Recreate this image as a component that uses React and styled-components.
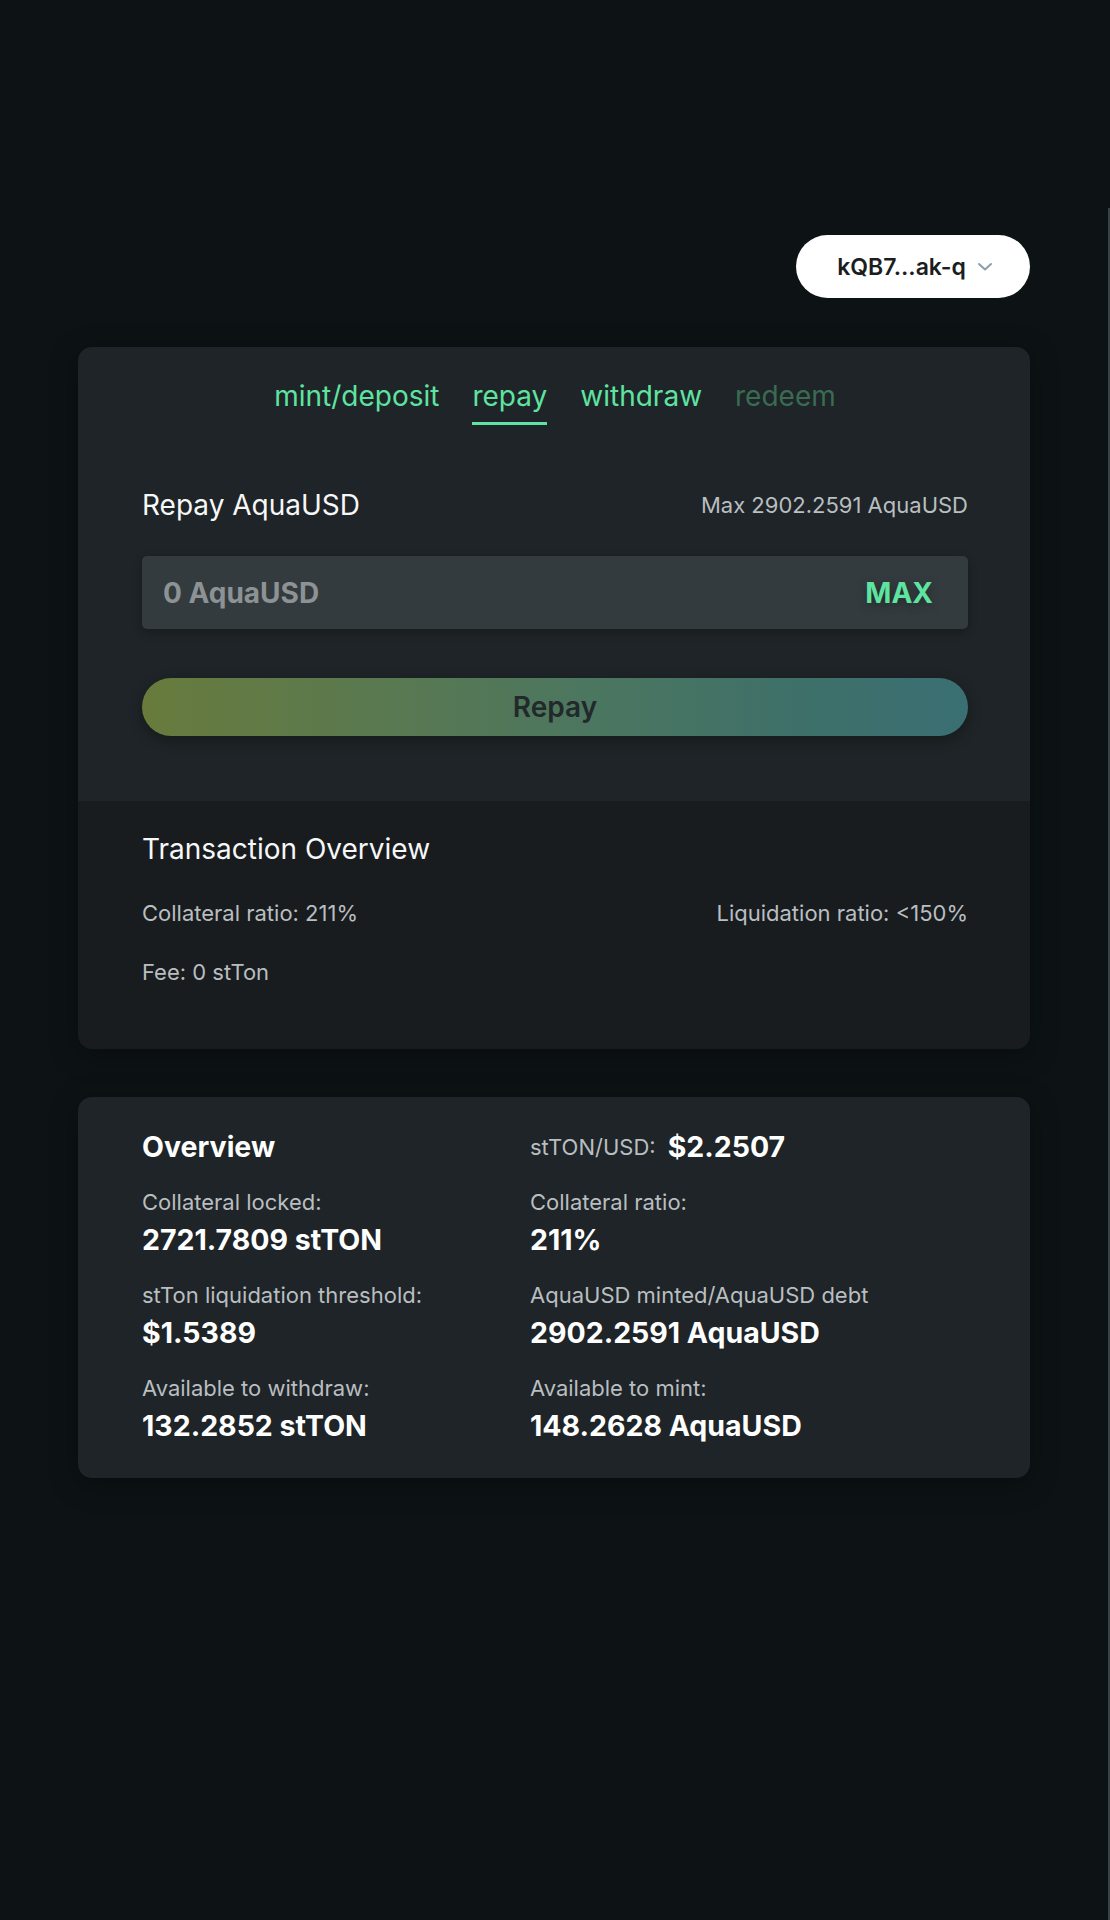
import React from "react";
import styled, { createGlobalStyle } from "styled-components";

const GlobalStyle = createGlobalStyle`
    * {
        box-sizing: border-box;
    }
    body {
        margin: 0;
        background-color: #0d1315;
        font-family: Inter, "Noto Sans", "Liberation Sans", sans-serif;
        color: #f4f5f5;
    }
`;

const colors = {
    green: "#5fe3a1",
    dimGreen: "#3a6b53",
    label: "#b9bec0",
    card: "#1e2427",
    cardDark: "#181c1f",
    input: "#343b3e",
};

function Chevron() {
    return (
        <svg width="16" height="10" viewBox="0 0 16 10" fill="none">
            <path d="M2 2l6 5.5L14 2" stroke="#8d9dab" strokeWidth="2" strokeLinecap="round" strokeLinejoin="round" />
        </svg>
    );
}

const tabs = [
    { label: "mint/deposit" },
    { label: "repay", active: true },
    { label: "withdraw" },
    { label: "redeem", disabled: true },
];

const overview = [
    { label: "Collateral locked:", value: "2721.7809 stTON" },
    { label: "Collateral ratio:", value: "211%" },
    { label: "stTon liquidation threshold:", value: "$1.5389" },
    { label: "AquaUSD minted/AquaUSD debt", value: "2902.2591 AquaUSD" },
    { label: "Available to withdraw:", value: "132.2852 stTON" },
    { label: "Available to mint:", value: "148.2628 AquaUSD" },
];

function App() {
    return (
        <>
            <GlobalStyle />
            <Page>
                <Shell>
                    <Column>
                        <Header>
                            <Wallet>
                                kQB7...ak-q
                                <Chevron />
                            </Wallet>
                        </Header>

                        <Card>
                            <Top>
                                <Tabs>
                                    {tabs.map((t) => (
                                        <Tab key={t.label} $active={t.active} $disabled={t.disabled}>
                                            {t.label}
                                        </Tab>
                                    ))}
                                </Tabs>
                                <TitleRow>
                                    <Title>Repay AquaUSD</Title>
                                    <Small>Max 2902.2591 AquaUSD</Small>
                                </TitleRow>
                                <InputBox>
                                    <Placeholder>0 AquaUSD</Placeholder>
                                    <MaxButton>MAX</MaxButton>
                                </InputBox>
                                <Submit>Repay</Submit>
                            </Top>
                            <Bottom>
                                <Title>Transaction Overview</Title>
                                <InfoRow>
                                    <Small>Collateral ratio: 211%</Small>
                                    <Small>Liquidation ratio: &lt;150%</Small>
                                </InfoRow>
                                <InfoRow $gap="33px">
                                    <Small>Fee: 0 stTon</Small>
                                </InfoRow>
                            </Bottom>
                        </Card>

                        <OverviewCard>
                            <Grid>
                                <Heading>Overview</Heading>
                                <Price>
                                    <Small>stTON/USD:</Small>
                                    <Value>$2.2507</Value>
                                </Price>
                                {overview.map((o) => (
                                    <Stat key={o.label}>
                                        <Small>{o.label}</Small>
                                        <Value>{o.value}</Value>
                                    </Stat>
                                ))}
                            </Grid>
                        </OverviewCard>
                    </Column>
                </Shell>
            </Page>
        </>
    );
}

const Page = styled.div`
    min-height: 1920px;
    padding-top: 208px;
`;

const Shell = styled.div`
    min-height: 1712px;
    border-right: 2px solid #3a4144;
`;

const Column = styled.div`
    width: 952px;
    margin: 0 auto;
    display: flex;
    flex-direction: column;
`;

const Header = styled.header`
    display: flex;
    justify-content: flex-end;
    padding-top: 27px;
    margin-bottom: 49px;
`;

const Wallet = styled.button`
    height: 63px;
    width: 234px;
    border: none;
    border-radius: 32px;
    background: #ffffff;
    display: flex;
    align-items: center;
    justify-content: center;
    gap: 11px;
    font-family: Inter, sans-serif;
    font-size: 23px;
    font-weight: 600;
    color: #1b1d1e;
    padding: 0 0 0 4px;
`;

const Card = styled.section`
    border-radius: 14px;
    overflow: hidden;
    box-shadow: 0 6px 28px rgba(0, 0, 0, 0.4);
`;

const Top = styled.div`
    background: ${colors.card};
    padding: 32px 62px 65px 64px;
`;

const Tabs = styled.nav`
    display: flex;
    justify-content: center;
    gap: 33px;
`;

const Tab = styled.span`
    font-size: 28px;
    line-height: 34px;
    padding-bottom: 9px;
    border-bottom: 3px solid ${(p) => (p.$active ? colors.green : "transparent")};
    color: ${(p) => (p.$disabled ? colors.dimGreen : colors.green)};
`;

const TitleRow = styled.div`
    display: flex;
    justify-content: space-between;
    align-items: center;
    margin-top: 63px;
`;

const Title = styled.h3`
    margin: 0;
    font-size: 28px;
    line-height: 34px;
    font-weight: 400;
    color: #f6f7f7;
`;

const Small = styled.span`
    font-size: 22px;
    line-height: 26px;
    color: ${colors.label};
`;

const InputBox = styled.div`
    margin-top: 34px;
    height: 73px;
    border-radius: 5px;
    background: ${colors.input};
    box-shadow: 0 3px 10px rgba(0, 0, 0, 0.25);
    display: flex;
    align-items: center;
    justify-content: space-between;
    padding: 0 35px 0 21px;
`;

const Placeholder = styled.span`
    font-size: 28px;
    font-weight: 700;
    color: #8d9294;
`;

const MaxButton = styled.span`
    font-size: 28px;
    font-weight: 700;
    color: ${colors.green};
    text-shadow: 0 3px 10px rgba(0, 0, 0, 0.35);
`;

const Submit = styled.button`
    margin-top: 49px;
    height: 58px;
    width: 100%;
    border: none;
    border-radius: 29px;
    background: linear-gradient(90deg, #687b3c 0%, #5a7950 28%, #4b7660 55%, #3e7069 80%, #3a6f73 100%);
    box-shadow: 0 4px 14px rgba(0, 0, 0, 0.3);
    font-family: Inter, sans-serif;
    font-size: 28px;
    font-weight: 600;
    color: #22292b;
`;

const Bottom = styled.div`
    background: ${colors.cardDark};
    padding: 31px 62px 64px 64px;
`;

const InfoRow = styled.div`
    display: flex;
    justify-content: space-between;
    margin-top: ${(p) => p.$gap || "34px"};
`;

const OverviewCard = styled.section`
    margin-top: 48px;
    background: ${colors.card};
    border-radius: 14px;
    box-shadow: 0 6px 28px rgba(0, 0, 0, 0.4);
    padding: 33px 64px 35px;
`;

const Grid = styled.div`
    display: grid;
    grid-template-columns: 388px 1fr;
    row-gap: 25px;
`;

const Heading = styled.h2`
    margin: 0;
    font-size: 28.5px;
    line-height: 34px;
    font-weight: 700;
    color: #ffffff;
`;

const Price = styled.div`
    display: flex;
    align-items: center;
    gap: 12px;
`;

const Stat = styled.div`
    display: flex;
    flex-direction: column;
    gap: 8px;
`;

const Value = styled.span`
    font-size: 28.5px;
    line-height: 34px;
    font-weight: 700;
    color: #ffffff;
`;

export default App;
